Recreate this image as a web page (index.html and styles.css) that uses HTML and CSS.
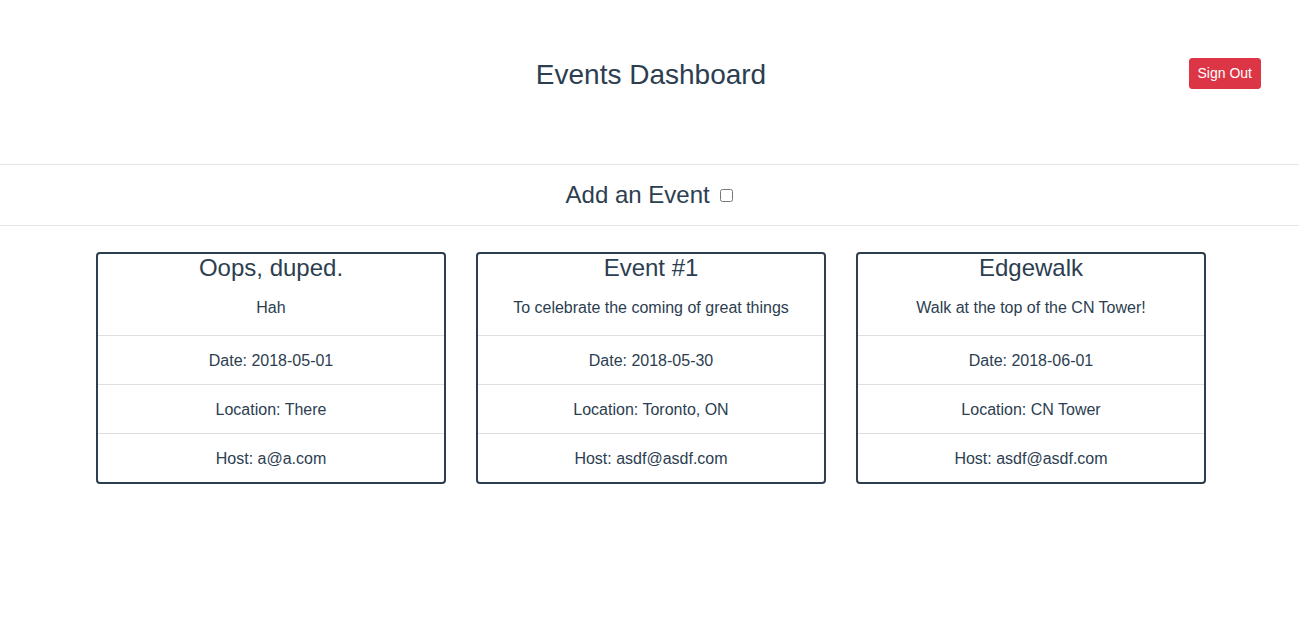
FILE: index.html
```html
<!DOCTYPE html>
<html>
<head>
<meta charset="utf-8">
<title>Events Dashboard</title>
<link rel="stylesheet" href="styles.css">
</head>
<body>
<div class="app">
  <header class="header">
    <div class="spacer"></div>
    <h1 class="title">Events Dashboard</h1>
    <button class="btn-signout">Sign Out</button>
  </header>
  <section class="add-bar">
    <h2 class="add-title">Add an Event <input type="checkbox" class="add-check"></h2>
  </section>
  <main class="cards">
    <div class="card">
      <div class="card-head">
        <h3 class="card-title">Oops, duped.</h3>
        <p class="card-desc">Hah</p>
      </div>
      <div class="card-row">Date: 2018-05-01</div>
      <div class="card-row">Location: There</div>
      <div class="card-row">Host: a@a.com</div>
    </div>
    <div class="card">
      <div class="card-head">
        <h3 class="card-title">Event #1</h3>
        <p class="card-desc">To celebrate the coming of great things</p>
      </div>
      <div class="card-row">Date: 2018-05-30</div>
      <div class="card-row">Location: Toronto, ON</div>
      <div class="card-row">Host: asdf@asdf.com</div>
    </div>
    <div class="card">
      <div class="card-head">
        <h3 class="card-title">Edgewalk</h3>
        <p class="card-desc">Walk at the top of the CN Tower!</p>
      </div>
      <div class="card-row">Date: 2018-06-01</div>
      <div class="card-row">Location: CN Tower</div>
      <div class="card-row">Host: asdf@asdf.com</div>
    </div>
  </main>
</div>
</body>
</html>
```
FILE: styles.css
```css
* { box-sizing: border-box; }
html, body { margin: 0; padding: 0; background: #fff; }
body {
  font-family: "Liberation Sans", Arial, Helvetica, sans-serif;
  color: #2c3e50;
  font-size: 16px;
  line-height: 1.5;
}
.header {
  height: 165px;
  border-bottom: 1px solid #e6e6e6;
  display: grid;
  grid-template-columns: 1fr auto 1fr;
  align-items: start;
  align-content: start;
  padding: 0 38px 0 41px;
}
.title {
  margin: 58px 0 0 0;
  font-size: 28px;
  font-weight: 400;
  line-height: 1.2;
}
.btn-signout {
  justify-self: end;
  margin-top: 58px;
  font-family: inherit;
  font-size: 14px;
  line-height: 21px;
  padding: 4px 8px;
  border: 1px solid #dc3545;
  border-radius: 3px;
  background: #dc3545;
  color: #fff;
  cursor: pointer;
}
.add-bar {
  height: 61px;
  border-bottom: 1px solid #e6e6e6;
  padding: 16px 0 0 3px;
  text-align: center;
}
.add-title {
  margin: 0;
  font-size: 24px;
  font-weight: 400;
  line-height: 1.2;
}
.add-check {
  width: 13px;
  height: 13px;
  margin: 0 3px 0 4px;
  vertical-align: 1px;
}
.cards {
  display: flex;
  justify-content: center;
  gap: 30px;
  padding: 26px 0 0 3px;
}
.card {
  width: 350px;
  border: 2px solid #2c3e50;
  border-radius: 4px;
  text-align: center;
}
.card-head { padding-bottom: 15px; }
.card-title {
  margin: 0;
  font-size: 24px;
  font-weight: 400;
  line-height: 1.2;
}
.card-desc {
  margin: 13px 0 0 0;
  line-height: 24px;
}
.card-row {
  border-top: 1px solid #dfdfdf;
  padding: 13px 20px 11px;
  line-height: 24px;
}
```
